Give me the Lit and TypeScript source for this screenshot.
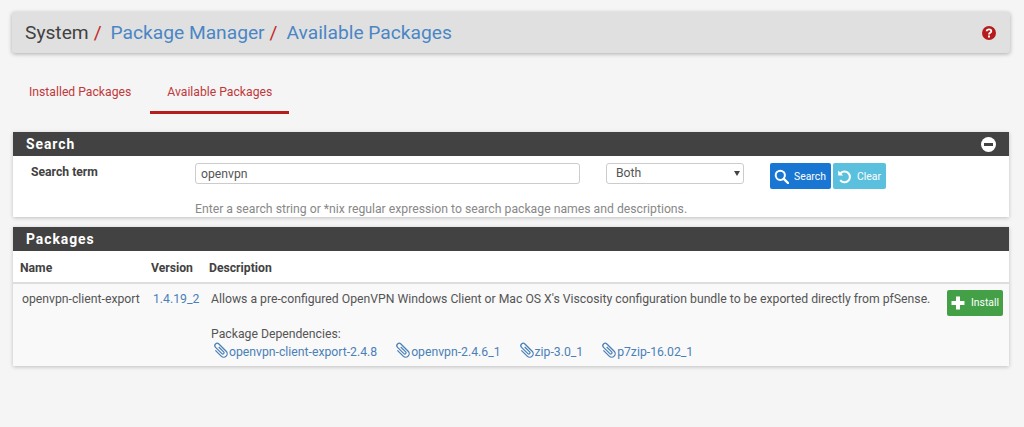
import { LitElement, html, css } from "lit";
import { customElement } from "lit/decorators.js";

const clip = html`<svg class="clip" viewBox="2 2 12 12" aria-hidden="true"><path d="M5.2 5 L5.2 11.6 A2.8 2.8 0 0 0 10.8 11.6 L10.8 3.4 A1.9 1.9 0 0 0 7 3.4 L7 10.6 A1 1 0 0 0 9 10.6 L9 5" transform="rotate(-45 8 8)"/></svg>`;

const deps = ["openvpn-client-export-2.4.8", "openvpn-2.4.6_1", "zip-3.0_1", "p7zip-16.02_1"];

@customElement("app-root")
export class AppRoot extends LitElement {
  static styles = css`
    :host { display: block; height: 427px; overflow: hidden; background: #f5f5f5; font-family: Roboto, "Liberation Sans", sans-serif; font-size: 12.23px; color: #555; }
    a { color: #4a80b8; text-decoration: none; }
    .page { padding: 12px 15px 0 13px; display: flex; flex-direction: column; }
    .bar { height: 41px; margin: 0 -1px; display: flex; align-items: center; justify-content: space-between; padding: 0 14px 0 13px; background: #e0e0e0; border-radius: 3px; box-shadow: 0 1px 4px rgba(0,0,0,.3); font-size: 19.2px; color: #424242; }
    .crumbs { display: flex; align-items: baseline; }
    .crumbs a { color: #4a86c5; }
    .sep { color: #c62828; margin: 0 9px 0 5px; }
    .help { width: 14px; height: 14px; display: block; }
    .tabs { display: flex; margin-top: 21px; height: 40px; }
    .tab { box-sizing: border-box; height: 40px; padding: 11px 16px 0; color: #c0393b; font-size: 12.2px; line-height: 14px; }
    .tab.active { padding: 11px 17px 0; margin-left: 3px; border-bottom: 3px solid #b71c1c; }
    .panel { background: #fff; box-shadow: 0 1px 4px rgba(0,0,0,.22); margin-top: 18px; }
    .panel + .panel { margin-top: 10px; }
    .head { height: 24px; background: #424242; color: #fff; font-weight: 700; font-size: 13.9px; letter-spacing: .95px; padding: 0 13px; display: flex; align-items: center; justify-content: space-between; }
    .toggle { width: 15px; height: 15px; display: block; }
    .search { height: 61px; display: grid; grid-template-columns: 182px 411px 164px auto; grid-template-rows: 46px 15px; }
    .label { font-weight: 700; color: #424242; padding: 8px 0 0 18px; font-size: 12.2px; line-height: 16px; }
    .input { box-sizing: border-box; width: 385px; height: 21px; margin-top: 7px; border: 1px solid #ccc; border-radius: 3px; padding: 0 5px; font-size: 12.2px; line-height: 19px; color: #555; font-family: inherit; background: #fff; }
    .select { box-sizing: border-box; width: 138px; height: 21px; margin-top: 7px; border: 1px solid #ccc; border-radius: 3px; padding: 0 2px 0 9px; font-size: 12.2px; line-height: 19px; color: #555; display: flex; justify-content: space-between; align-items: center; }
    .caret { width: 0; height: 0; margin-right: 1px; border-left: 3px solid transparent; border-right: 3px solid transparent; border-top: 5px solid #444; }
    .btns { display: flex; gap: 2px; margin-top: 7px; align-items: flex-start; }
    .btn { box-sizing: border-box; height: 26px; display: inline-flex; align-items: center; gap: 4px; padding: 0 4px; border-radius: 2px; color: #fff; font-size: 10.4px; }
    .btn svg { width: 15px; height: 15px; display: block; }
    .blue { width: 61px; background: #1976d2; gap: 5px; }
    .cyan { width: 53px; background: #5bc0de; gap: 5px; }
    .green { width: 56px; background: #43a047; padding: 0 4px; gap: 6px; }
    .green svg { width: 14px; height: 14px; }
    .hint { grid-column: 2 / 5; color: #888; font-size: 12.22px; line-height: 14px; }
    .table { display: grid; grid-template-columns: 131px 58px 745px 1fr; }
    .th { height: 33px; box-sizing: border-box; padding: 10px 0 0 7px; font-weight: 700; color: #424242; font-size: 12.2px; line-height: 14px; border-bottom: 2px solid #ddd; }
    .td { height: 82px; box-sizing: border-box; padding: 8px 0 0 9px; background: #f9f9f9; line-height: 14px; font-size: 12.23px; }
    .td.act { padding: 6px 0 0 0; }
    .dep-title { margin-top: 21px; }
    .deps { display: flex; margin-top: 4px; margin-left: 2px; }
    .dep { display: inline-flex; align-items: center; gap: 1px; margin-right: 18px; }
    .clip { width: 15px; height: 15px; fill: none; stroke: #4a80b8; stroke-width: 1; display: block; margin-top: -3px; overflow: visible; }
  `;

  render() {
    return html`<div class="page">
      <div class="bar">
        <div class="crumbs">
          <span>System</span><span class="sep">/</span>
          <a href="#">Package Manager</a><span class="sep">/</span>
          <a href="#">Available Packages</a>
        </div>
        <svg class="help" viewBox="0 0 14 14" aria-hidden="true"><circle cx="7" cy="7" r="7" fill="#b71c1c"/><path d="M4.7 5.3 C4.8 2.8 9.3 2.8 9.3 5.3 C9.3 6.9 7 6.8 7 8.4" fill="none" stroke="#fff" stroke-width="1.8"/><rect x="6" y="9.5" width="2" height="2" fill="#fff"/></svg>
      </div>
      <nav class="tabs">
        <a class="tab" href="#">Installed Packages</a>
        <a class="tab active" href="#">Available Packages</a>
      </nav>
      <section class="panel">
        <div class="head"><span>Search</span>
          <svg class="toggle" viewBox="0 0 14 14" aria-hidden="true"><circle cx="7" cy="7" r="7" fill="#fff"/><rect x="2.8" y="5.6" width="8.4" height="2.8" fill="#424242"/></svg>
        </div>
        <div class="search">
          <div class="label">Search term</div>
          <input class="input" .value=${"openvpn"} />
          <div class="select"><span>Both</span><span class="caret"></span></div>
          <div class="btns">
            <a class="btn blue" href="#"><svg viewBox="0 0 15 15" aria-hidden="true"><circle cx="6.3" cy="6.3" r="4.6" fill="none" stroke="#fff" stroke-width="2"/><path d="M9.8 9.8 L14 14" stroke="#fff" stroke-width="2.4" stroke-linecap="round"/></svg>Search</a>
            <a class="btn cyan" href="#"><svg viewBox="0 0 15 15" aria-hidden="true"><path d="M3.6 4.2 A5.4 5.4 0 1 1 3.2 11.2" fill="none" stroke="#fff" stroke-width="2"/><path d="M1.2 1.6 L1.2 6.6 L6.2 6.6 Z" fill="#fff"/></svg>Clear</a>
          </div>
          <div class="hint">Enter a search string or *nix regular expression to search package names and descriptions.</div>
        </div>
      </section>
      <section class="panel">
        <div class="head"><span>Packages</span></div>
        <div class="table">
          <div class="th">Name</div><div class="th">Version</div><div class="th">Description</div><div class="th"></div>
          <div class="td">openvpn-client-export</div>
          <div class="td"><a href="#">1.4.19_2</a></div>
          <div class="td">
            <div>Allows a pre-configured OpenVPN Windows Client or Mac OS X's Viscosity configuration bundle to be exported directly from pfSense.</div>
            <div class="dep-title">Package Dependencies:</div>
            <div class="deps">${deps.map((d) => html`<a class="dep" href="#">${clip}${d}</a>`)}</div>
          </div>
          <div class="td act"><a class="btn green" href="#"><svg viewBox="0 0 14 14" aria-hidden="true"><path d="M5 .5h4v4.5h4.5v4H9v4.5H5V9H.5V5H5z" fill="#fff"/></svg>Install</a></div>
        </div>
      </section>
    </div>`;
  }
}
